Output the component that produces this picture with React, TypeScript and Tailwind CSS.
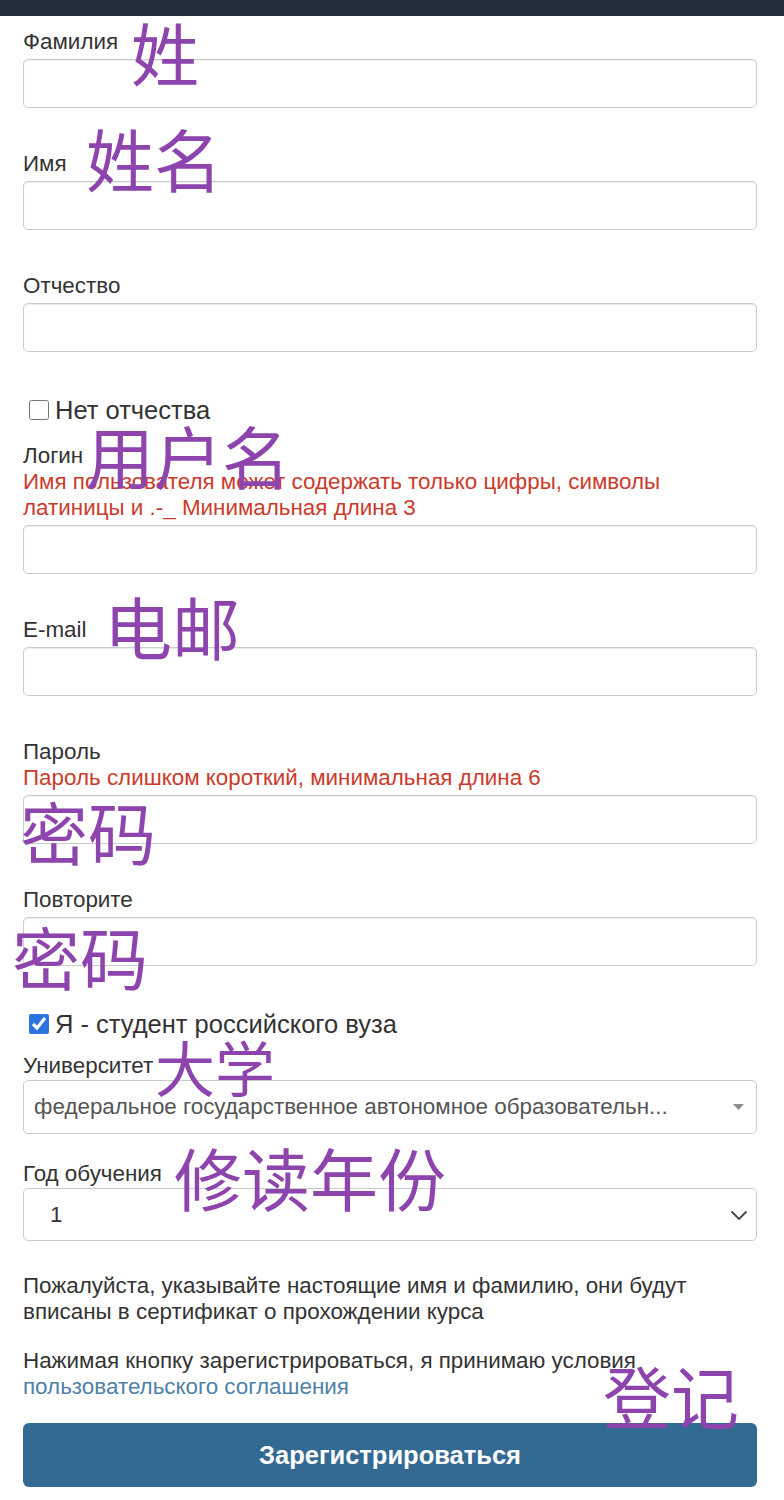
import React from "react";

const font = "font-[family-name:Liberation_Sans,Arial,sans-serif]";
const cjk = "font-[family-name:Noto_Sans_CJK_SC,sans-serif]";

function Label({ children }: { children: React.ReactNode }) {
  return <div className="text-[22.4px] leading-[26px] text-[#333]">{children}</div>;
}

function ErrorText({ children }: { children: React.ReactNode }) {
  return <div className="text-[22.4px] leading-[26px] text-[#cc3a2b]">{children}</div>;
}

function Input() {
  return (
    <input
      type="text"
      className="mt-[4px] block h-[49px] w-full rounded-[5px] border border-[#cccccc] bg-white px-3 shadow-[inset_0_1px_1px_rgba(0,0,0,0.075)] outline-none"
    />
  );
}

// аннотации поверх формы
function Note({ text, x, y, size = 68 }: { text: string; x: number; y: number; size?: number }) {
  return (
    <div
      className={`pointer-events-none absolute ${cjk} leading-none text-[#8e44ad]`}
      style={{ left: x, top: y, fontSize: size }}
    >
      {text}
    </div>
  );
}

export default function App() {
  return (
    <div className={`relative min-h-[1500px] w-[784px] bg-white ${font}`}>
      <div className="h-4 bg-[#232f3a]" />

      <div className="pl-[23px] pr-[27px] pt-[13px]">
        <Label>Фамилия</Label>
        <Input />

        <div className="mt-[43px]">
          <Label>Имя</Label>
          <Input />
        </div>

        <div className="mt-[43px]">
          <Label>Отчество</Label>
          <Input />
        </div>

        <label className="mt-[43px] mb-[18px] flex items-center gap-[6px] pl-[6px] text-[25.5px] leading-[30px] text-[#333]">
          <input type="checkbox" className="m-0 h-[20px] w-[20px]" />
          Нет отчества
        </label>

        <Label>Логин</Label>
        <ErrorText>
          Имя пользователя может содержать только цифры, символы латиницы и .-_ Минимальная длина 3
        </ErrorText>
        <Input />

        <div className="mt-[43px]">
          <Label>E-mail</Label>
          <Input />
        </div>

        <div className="mt-[43px]">
          <Label>Пароль</Label>
          <ErrorText>Пароль слишком короткий, минимальная длина 6</ErrorText>
          <Input />
        </div>

        <div className="mt-[43px]">
          <Label>Повторите</Label>
          <Input />
        </div>

        <label className="mt-[43px] mb-[14px] flex items-center gap-[6px] pl-[6px] text-[25.5px] leading-[30px] text-[#333]">
          <input type="checkbox" defaultChecked className="m-0 h-[20px] w-[20px] accent-[#2a73e0]" />
          Я - студент российского вуза
        </label>

        <Label>Университет</Label>
        <div className="mt-px flex h-[54px] items-center justify-between rounded-[5px] border border-[#cccccc] pl-[10px] pr-[12px]">
          <span className="truncate text-[22.4px] text-[#555]">
            федеральное государственное автономное образовательн...
          </span>
          <svg width="11" height="7" viewBox="0 0 11 7" className="shrink-0">
            <path d="M0 0 L11 0 L5.5 6 Z" fill="#8f8f8f" />
          </svg>
        </div>

        <div className="mt-[27px]">
          <Label>Год обучения</Label>
          <div className="mt-px flex h-[53px] items-center justify-between rounded-[5px] border border-[#cccccc] pl-[26px] pr-[8px]">
            <span className="text-[22.4px] text-[#333]">1</span>
            <svg width="18" height="12" viewBox="0 0 18 12" className="shrink-0">
              <path d="M1.5 2.5 L9 10 L16.5 2.5" fill="none" stroke="#444" strokeWidth="1.8" />
            </svg>
          </div>
        </div>

        <p className="mt-[32px] text-[22.4px] leading-[26px] text-[#333]">
          Пожалуйста, указывайте настоящие имя и фамилию, они будут вписаны в сертификат о прохождении курса
        </p>
        <p className="mt-[23px] text-[22.4px] leading-[26px] text-[#333]">
          Нажимая кнопку зарегистрироваться, я принимаю условия{" "}
          <a className="text-[#4f81a8]">пользовательского соглашения</a>
        </p>

        <button className="mt-[23px] h-[64px] w-full rounded-[6px] bg-[#336a94] text-[25.5px] font-bold text-white">
          Зарегистрироваться
        </button>
      </div>

      <Note text="姓" x={131} y={18} />
      <Note text="姓名" x={86} y={124} />
      <Note text="用户名" x={86} y={421} />
      <Note text="电邮" x={104} y={592} />
      <Note text="密码" x={20} y={797} />
      <Note text="密码" x={12} y={922} />
      <Note text="大学" x={155} y={1036} size={60} />
      <Note text="修读年份" x={174} y={1143} />
      <Note text="登记" x={603} y={1361} />
    </div>
  );
}
